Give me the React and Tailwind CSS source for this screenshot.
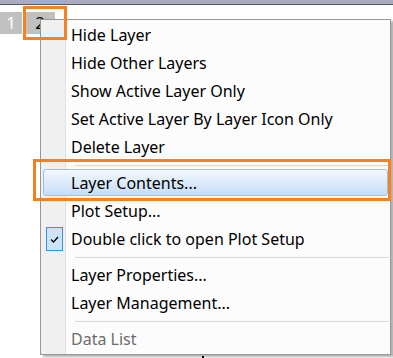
import React from "react";

const font = { fontFamily: '"Noto Sans", "Liberation Sans", sans-serif' };

function Item({ label, active, disabled, checked }) {
  return (
    <div className="relative h-[28px] flex items-center pt-[2px]">
      {active && (
        <div className="absolute left-[2px] right-[2px] top-[1px] bottom-0 rounded-[3px] border border-[#9ec0e8] bg-[linear-gradient(to_bottom,#f3f8fe,#c6ddf5)]" />
      )}
      {checked && (
        <div className="absolute left-[5px] top-[3px] w-[17px] h-[24px] border border-[#3c8ee0] bg-[#cce4f7] flex items-center justify-center">
          <svg width="9" height="7" viewBox="0 0 9 7">
            <path d="M1 3.5 L3.5 6 L8 1" fill="none" stroke="#000" strokeWidth="1.3" />
          </svg>
        </div>
      )}
      <span
        className={`relative pl-[30px] text-[16px] leading-none ${disabled ? "text-[#6d6d6d]" : "text-black"}`}
      >
        {label}
      </span>
    </div>
  );
}

function Separator() {
  return (
    <div className="pt-[5px] pb-[2px] pl-[34px] pr-[1px]">
      <div className="h-px bg-[#d7d7d7]" />
    </div>
  );
}

export default function App() {
  return (
    <div className="relative w-[393px] h-[358px] bg-white overflow-hidden" style={font}>
      <div className="h-[5px] bg-[#aaaac0] border-b border-[#5a5a5a]" />
      <div className="flex gap-[3px] pt-[7px]">
        <div className="w-[22px] h-[22px] bg-[#c0c0c0] text-white text-[17px] flex items-center justify-center">1</div>
        <div className="w-[30px] h-[22px] bg-[#c0c0c0] text-black text-[17px] flex items-center justify-center">2</div>
      </div>

      <div className="absolute left-[40px] top-[19px] w-[351px] h-[336px] border border-[#979797] shadow-[3px_2px_2px_rgba(0,0,0,0.3)] bg-[linear-gradient(to_right,#f0f0f0_0_24px,#e2e2e2_24px_25px,#fcfcfc_25px)]">
        <Item label="Hide Layer" />
        <Item label="Hide Other Layers" />
        <Item label="Show Active Layer Only" />
        <Item label="Set Active Layer By Layer Icon Only" />
        <Item label="Delete Layer" />
        <Separator />
        <Item label="Layer Contents..." active />
        <Item label="Plot Setup..." />
        <Item label="Double click to open Plot Setup" checked />
        <Separator />
        <Item label="Layer Properties..." />
        <Item label="Layer Management..." />
        <Separator />
        <Item label="Data List" disabled />
      </div>

      <div className="absolute left-[202px] top-[356px] w-[2px] h-[2px] bg-black" />
      <div className="absolute left-[23px] top-[6px] w-[44px] h-[34px] border-[3px] border-[#f7811e]" />
      <div className="absolute left-[33px] top-[159px] w-[358px] h-[42px] border-[3px] border-[#f7811e]" />
    </div>
  );
}
